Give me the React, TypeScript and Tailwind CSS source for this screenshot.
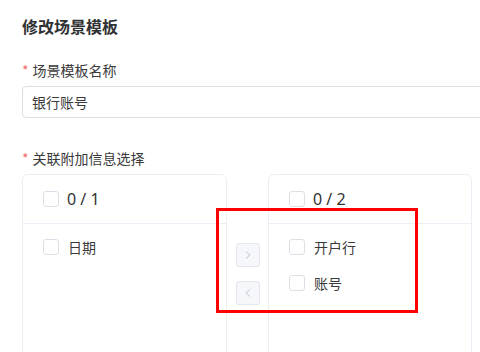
import React from "react";

// Transfer panel item type
type Item = { key: string; label: string };

const leftItems: Item[] = [{ key: "date", label: "日期" }];
const rightItems: Item[] = [
  { key: "bank", label: "开户行" },
  { key: "account", label: "账号" },
];

const Checkbox = () => (
  <span className="inline-block w-[16px] h-[16px] shrink-0 rounded-[3px] border border-[#dcdfe6] bg-white" />
);

const Panel = ({ items, width }: { items: Item[]; width: string }) => (
  <div className={`${width} h-[260px] shrink-0 rounded-[6px] border border-[#ebeef5] bg-white`}>
    {/* ---------- Header ---------- */}
    <div className="h-[49px] flex items-center gap-[8px] pl-[20px] border-b border-[#ebeef5]">
      <Checkbox />
      <span className="text-[16px] text-[#333333] font-['Noto_Sans','Noto_Sans_CJK_SC',sans-serif]">0 / {items.length}</span>
    </div>
    {/* ---------- List ---------- */}
    <div className="pt-[5px]">
      {items.map((item) => (
        <div key={item.key} className="h-[36px] flex items-center gap-[9px] pl-[20px]">
          <Checkbox />
          <span className="text-[14px] text-[#3a3a3a]">{item.label}</span>
        </div>
      ))}
    </div>
  </div>
);

const ArrowButton = ({ dir }: { dir: "left" | "right" }) => (
  <button className="w-[24px] h-[24px] flex items-center justify-center rounded-[3px] border border-[#e4e7ed] bg-[#f5f7fa]">
    <svg width="10" height="10" viewBox="0 0 10 10" fill="none" stroke="#c0c4cc" strokeWidth="1">
      {dir === "right" ? <polyline points="3,1.5 7,5 3,8.5" /> : <polyline points="7,1.5 3,5 7,8.5" />}
    </svg>
  </button>
);

const App = () => {
  return (
    <div className="relative w-[480px] h-[352px] overflow-hidden bg-white font-['Noto_Sans_CJK_SC','Noto_Sans',sans-serif]">
      <div className="pl-[22px] pt-[16px]">
        <h2 className="text-[16px] leading-[20px] font-bold text-[#303133]">修改场景模板</h2>

        {/* ---------- Name ---------- */}
        <div className="mt-[24px] h-[20px] flex items-center text-[14px] text-[#3a3a3a]">
          <span className="text-[#f56c6c] mr-[4px]">*</span>
          场景模板名称
        </div>
        <div className="mt-[6px] w-[480px] h-[32px] flex items-center pl-[9px] rounded-[4px] border border-[#dcdfe6] text-[14px] text-[#3a3a3a]">
          银行账号
        </div>

        {/* ---------- Transfer ---------- */}
        <div className="mt-[30px] h-[20px] flex items-center text-[14px] text-[#3a3a3a]">
          <span className="text-[#f56c6c] mr-[4px]">*</span>
          关联附加信息选择
        </div>
        <div className="mt-[6px] flex">
          <Panel items={leftItems} width="w-[205px]" />
          <div className="w-[41px] mt-[69px] flex flex-col items-center gap-[14px]">
            <ArrowButton dir="right" />
            <ArrowButton dir="left" />
          </div>
          <Panel items={rightItems} width="w-[204px]" />
        </div>
      </div>

      {/* ---------- Highlight annotation ---------- */}
      <div className="absolute left-[216px] top-[208px] w-[202px] h-[105px] border-[3px] border-[#ff0000]" />
    </div>
  );
};

export default App;
